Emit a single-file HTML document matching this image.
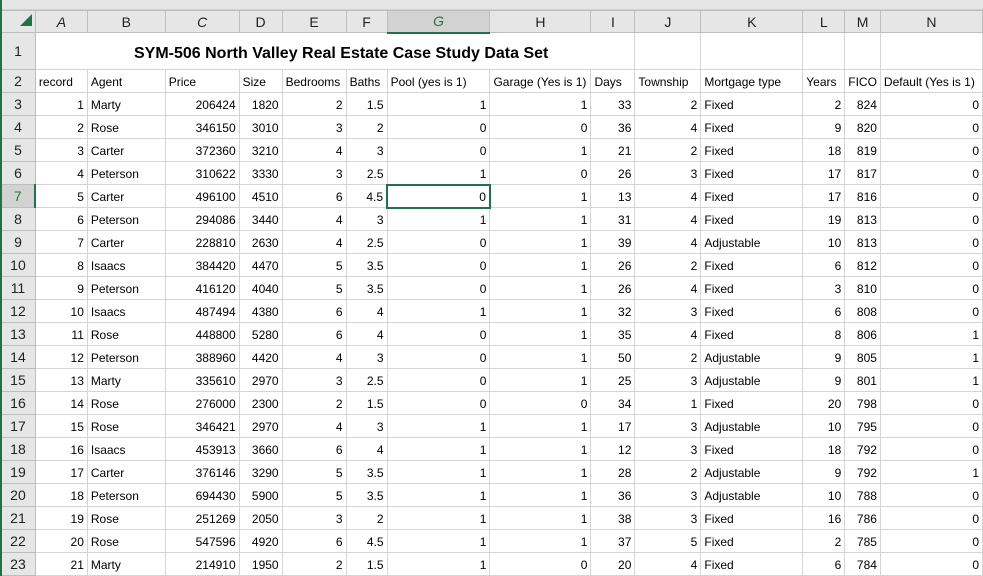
<!DOCTYPE html>
<html><head><meta charset="utf-8"><style>
*{margin:0;padding:0;box-sizing:border-box}
body{width:983px;height:576px;overflow:hidden;background:#fff;font-family:"Liberation Sans",sans-serif;font-size:12px;color:#000;position:relative}
.top{position:absolute;left:0;top:0;width:983px;height:10px;background:#e6e6e6;border-bottom:1px solid #d0d0d0}
.lg{position:absolute;left:0;top:0;width:2px;height:576px;background:#217346;z-index:5}
table{position:absolute;left:0;top:10px;border-collapse:collapse;table-layout:fixed}
td{border:1px solid #d4d4d4;height:23px;padding:0 3px;white-space:nowrap;overflow:hidden;vertical-align:bottom;padding-bottom:3px;font-weight:normal}
tr.h td{background:#e6e6e6;border-color:#bdbdbd;text-align:center;font-size:14px;height:22px;color:#222;vertical-align:middle;padding:0}
td.rh{background:#e6e6e6;border-color:#bdbdbd;text-align:center;font-size:14px;color:#222;padding:0;vertical-align:middle}
tr.t td{height:37px}
td.title{text-align:center;font-weight:bold;font-size:16px;vertical-align:middle;padding:6px 0 0 12px}
.r{text-align:right}
tr.h td.sel{background:#d2d2d2;color:#217346;border-bottom:2px solid #217346}
td.rh.sel{background:#d2d2d2;color:#217346;border-right:2px solid #217346}
td.act{border:2px solid #217346}
.corner{width:0;height:0;border-left:12px solid transparent;border-bottom:12px solid #217346;position:absolute;left:20px;top:14px}
</style></head><body>
<div class="top"></div>
<table>
<colgroup><col style="width:35px"><col style="width:52px"><col style="width:78px"><col style="width:74px"><col style="width:43px"><col style="width:64px"><col style="width:41px"><col style="width:103px"><col style="width:101px"><col style="width:44px"><col style="width:66px"><col style="width:102px"><col style="width:42px"><col style="width:35px"><col style="width:102px"></colgroup>
<tr class="h"><td></td><td><i>A</i></td><td>B</td><td><i>C</i></td><td>D</td><td>E</td><td>F</td><td class="sel"><i>G</i></td><td>H</td><td>I</td><td>J</td><td>K</td><td>L</td><td>M</td><td>N</td></tr>
<tr class="t"><td class="rh">1</td><td colspan="9" class="title">SYM-506 North Valley Real Estate Case Study Data Set</td><td></td><td></td><td></td><td></td><td></td></tr>
<tr><td class="rh">2</td><td>record</td><td>Agent</td><td>Price</td><td>Size</td><td>Bedrooms</td><td>Baths</td><td>Pool (yes is 1)</td><td>Garage (Yes is 1)</td><td>Days</td><td>Township</td><td>Mortgage type</td><td>Years</td><td>FICO</td><td>Default (Yes is 1)</td></tr>
<tr><td class="rh">3</td><td class="r">1</td><td>Marty</td><td class="r">206424</td><td class="r">1820</td><td class="r">2</td><td class="r">1.5</td><td class="r">1</td><td class="r">1</td><td class="r">33</td><td class="r">2</td><td>Fixed</td><td class="r">2</td><td class="r">824</td><td class="r">0</td></tr>
<tr><td class="rh">4</td><td class="r">2</td><td>Rose</td><td class="r">346150</td><td class="r">3010</td><td class="r">3</td><td class="r">2</td><td class="r">0</td><td class="r">0</td><td class="r">36</td><td class="r">4</td><td>Fixed</td><td class="r">9</td><td class="r">820</td><td class="r">0</td></tr>
<tr><td class="rh">5</td><td class="r">3</td><td>Carter</td><td class="r">372360</td><td class="r">3210</td><td class="r">4</td><td class="r">3</td><td class="r">0</td><td class="r">1</td><td class="r">21</td><td class="r">2</td><td>Fixed</td><td class="r">18</td><td class="r">819</td><td class="r">0</td></tr>
<tr><td class="rh">6</td><td class="r">4</td><td>Peterson</td><td class="r">310622</td><td class="r">3330</td><td class="r">3</td><td class="r">2.5</td><td class="r">1</td><td class="r">0</td><td class="r">26</td><td class="r">3</td><td>Fixed</td><td class="r">17</td><td class="r">817</td><td class="r">0</td></tr>
<tr><td class="rh sel">7</td><td class="r">5</td><td>Carter</td><td class="r">496100</td><td class="r">4510</td><td class="r">6</td><td class="r">4.5</td><td class="r act">0</td><td class="r">1</td><td class="r">13</td><td class="r">4</td><td>Fixed</td><td class="r">17</td><td class="r">816</td><td class="r">0</td></tr>
<tr><td class="rh">8</td><td class="r">6</td><td>Peterson</td><td class="r">294086</td><td class="r">3440</td><td class="r">4</td><td class="r">3</td><td class="r">1</td><td class="r">1</td><td class="r">31</td><td class="r">4</td><td>Fixed</td><td class="r">19</td><td class="r">813</td><td class="r">0</td></tr>
<tr><td class="rh">9</td><td class="r">7</td><td>Carter</td><td class="r">228810</td><td class="r">2630</td><td class="r">4</td><td class="r">2.5</td><td class="r">0</td><td class="r">1</td><td class="r">39</td><td class="r">4</td><td>Adjustable</td><td class="r">10</td><td class="r">813</td><td class="r">0</td></tr>
<tr><td class="rh">10</td><td class="r">8</td><td>Isaacs</td><td class="r">384420</td><td class="r">4470</td><td class="r">5</td><td class="r">3.5</td><td class="r">0</td><td class="r">1</td><td class="r">26</td><td class="r">2</td><td>Fixed</td><td class="r">6</td><td class="r">812</td><td class="r">0</td></tr>
<tr><td class="rh">11</td><td class="r">9</td><td>Peterson</td><td class="r">416120</td><td class="r">4040</td><td class="r">5</td><td class="r">3.5</td><td class="r">0</td><td class="r">1</td><td class="r">26</td><td class="r">4</td><td>Fixed</td><td class="r">3</td><td class="r">810</td><td class="r">0</td></tr>
<tr><td class="rh">12</td><td class="r">10</td><td>Isaacs</td><td class="r">487494</td><td class="r">4380</td><td class="r">6</td><td class="r">4</td><td class="r">1</td><td class="r">1</td><td class="r">32</td><td class="r">3</td><td>Fixed</td><td class="r">6</td><td class="r">808</td><td class="r">0</td></tr>
<tr><td class="rh">13</td><td class="r">11</td><td>Rose</td><td class="r">448800</td><td class="r">5280</td><td class="r">6</td><td class="r">4</td><td class="r">0</td><td class="r">1</td><td class="r">35</td><td class="r">4</td><td>Fixed</td><td class="r">8</td><td class="r">806</td><td class="r">1</td></tr>
<tr><td class="rh">14</td><td class="r">12</td><td>Peterson</td><td class="r">388960</td><td class="r">4420</td><td class="r">4</td><td class="r">3</td><td class="r">0</td><td class="r">1</td><td class="r">50</td><td class="r">2</td><td>Adjustable</td><td class="r">9</td><td class="r">805</td><td class="r">1</td></tr>
<tr><td class="rh">15</td><td class="r">13</td><td>Marty</td><td class="r">335610</td><td class="r">2970</td><td class="r">3</td><td class="r">2.5</td><td class="r">0</td><td class="r">1</td><td class="r">25</td><td class="r">3</td><td>Adjustable</td><td class="r">9</td><td class="r">801</td><td class="r">1</td></tr>
<tr><td class="rh">16</td><td class="r">14</td><td>Rose</td><td class="r">276000</td><td class="r">2300</td><td class="r">2</td><td class="r">1.5</td><td class="r">0</td><td class="r">0</td><td class="r">34</td><td class="r">1</td><td>Fixed</td><td class="r">20</td><td class="r">798</td><td class="r">0</td></tr>
<tr><td class="rh">17</td><td class="r">15</td><td>Rose</td><td class="r">346421</td><td class="r">2970</td><td class="r">4</td><td class="r">3</td><td class="r">1</td><td class="r">1</td><td class="r">17</td><td class="r">3</td><td>Adjustable</td><td class="r">10</td><td class="r">795</td><td class="r">0</td></tr>
<tr><td class="rh">18</td><td class="r">16</td><td>Isaacs</td><td class="r">453913</td><td class="r">3660</td><td class="r">6</td><td class="r">4</td><td class="r">1</td><td class="r">1</td><td class="r">12</td><td class="r">3</td><td>Fixed</td><td class="r">18</td><td class="r">792</td><td class="r">0</td></tr>
<tr><td class="rh">19</td><td class="r">17</td><td>Carter</td><td class="r">376146</td><td class="r">3290</td><td class="r">5</td><td class="r">3.5</td><td class="r">1</td><td class="r">1</td><td class="r">28</td><td class="r">2</td><td>Adjustable</td><td class="r">9</td><td class="r">792</td><td class="r">1</td></tr>
<tr><td class="rh">20</td><td class="r">18</td><td>Peterson</td><td class="r">694430</td><td class="r">5900</td><td class="r">5</td><td class="r">3.5</td><td class="r">1</td><td class="r">1</td><td class="r">36</td><td class="r">3</td><td>Adjustable</td><td class="r">10</td><td class="r">788</td><td class="r">0</td></tr>
<tr><td class="rh">21</td><td class="r">19</td><td>Rose</td><td class="r">251269</td><td class="r">2050</td><td class="r">3</td><td class="r">2</td><td class="r">1</td><td class="r">1</td><td class="r">38</td><td class="r">3</td><td>Fixed</td><td class="r">16</td><td class="r">786</td><td class="r">0</td></tr>
<tr><td class="rh">22</td><td class="r">20</td><td>Rose</td><td class="r">547596</td><td class="r">4920</td><td class="r">6</td><td class="r">4.5</td><td class="r">1</td><td class="r">1</td><td class="r">37</td><td class="r">5</td><td>Fixed</td><td class="r">2</td><td class="r">785</td><td class="r">0</td></tr>
<tr><td class="rh">23</td><td class="r">21</td><td>Marty</td><td class="r">214910</td><td class="r">1950</td><td class="r">2</td><td class="r">1.5</td><td class="r">1</td><td class="r">0</td><td class="r">20</td><td class="r">4</td><td>Fixed</td><td class="r">6</td><td class="r">784</td><td class="r">0</td></tr>
</table>
<div class="corner"></div>
<div class="lg"></div>
</body></html>
